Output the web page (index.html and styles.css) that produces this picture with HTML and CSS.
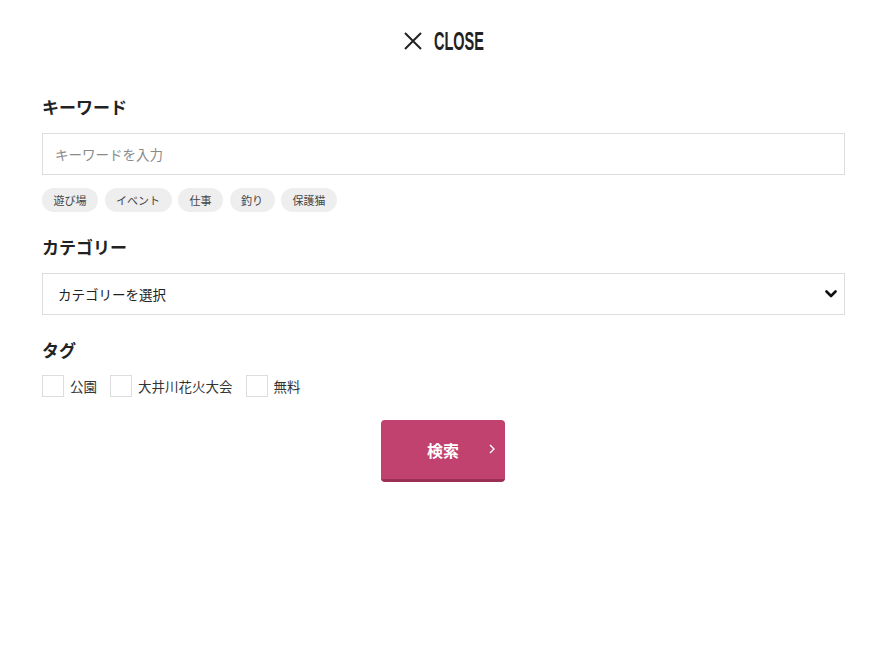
FILE: index.html
```html
<!DOCTYPE html>
<html lang="ja">
<head>
<meta charset="utf-8">
<title>検索</title>
<link rel="stylesheet" href="styles.css">
</head>
<body>
<div class="modal">
  <div class="close-row">
    <svg class="close-icon" width="18" height="18" viewBox="0 0 18 18"><path d="M1 1L17 17M17 1L1 17" stroke="#222" stroke-width="2" fill="none"/></svg>
    <span class="close-box"><span class="close-text">CLOSE</span></span>
  </div>

  <section class="group group-keyword">
    <h2 class="label">キーワード</h2>
    <input class="field" type="text" placeholder="キーワードを入力">
    <div class="chips">
      <span class="chip">遊び場</span>
      <span class="chip">イベント</span>
      <span class="chip">仕事</span>
      <span class="chip">釣り</span>
      <span class="chip">保護猫</span>
    </div>
  </section>

  <section class="group group-category">
    <h2 class="label">カテゴリー</h2>
    <div class="select">
      <span>カテゴリーを選択</span>
      <svg width="12" height="8" viewBox="0 0 12 8"><path d="M1.5 1.5L6 6L10.5 1.5" stroke="#111" stroke-width="2.6" fill="none" stroke-linecap="round" stroke-linejoin="round"/></svg>
    </div>
  </section>

  <section class="group group-tag">
    <h2 class="label">タグ</h2>
    <div class="checks">
      <label class="check"><span class="box"></span>公園</label>
      <label class="check"><span class="box"></span>大井川花火大会</label>
      <label class="check"><span class="box"></span>無料</label>
    </div>
  </section>

  <div class="actions">
    <button class="submit" type="button">
      <span class="submit-text">検索</span>
      <svg class="submit-arrow" width="6" height="10" viewBox="0 0 6 10"><path d="M1 1L5 5L1 9" stroke="#fff" stroke-width="1.4" fill="none"/></svg>
    </button>
  </div>
</div>
</body>
</html>
```

FILE: styles.css
```css
* { box-sizing: border-box; }
html, body { margin: 0; background: #fff; }
body {
  font-family: "Noto Sans CJK JP", "Noto Sans", sans-serif;
  color: #222;
}
.modal {
  padding: 28px 41px 0 42px;
}
.close-row {
  display: flex;
  justify-content: center;
  align-items: center;
  gap: 12px;
  height: 26px;
}
.close-box {
  display: inline-block;
  width: 50px;
  height: 26px;
  overflow: visible;
  white-space: nowrap;
}
.close-text {
  display: inline-block;
  font-family: "Liberation Sans", sans-serif;
  font-size: 25px;
  font-weight: 700;
  line-height: 26px;
  color: #222;
  transform: scaleX(0.58);
  transform-origin: left center;
}
.label {
  margin: 0;
  font-size: 17px;
  font-weight: 700;
  line-height: 24px;
  color: #222;
}
.group-keyword { margin-top: 41px; }
.group-category { margin-top: 23px; }
.group-tag { margin-top: 23px; }
.field {
  display: block;
  width: 100%;
  height: 42px;
  margin-top: 14px;
  border: 1px solid #ddd;
  padding: 0 12px;
  font-family: "Noto Sans CJK JP", sans-serif;
  font-size: 13.5px;
  color: #222;
  outline: none;
}
.field::placeholder { color: #8a8a8a; }
.chips {
  display: flex;
  gap: 6.5px;
  margin-top: 13px;
}
.chip {
  height: 24px;
  line-height: 24px;
  padding: 0 11.5px;
  border-radius: 12px;
  background: #eeeeee;
  font-size: 11px;
  color: #444;
}
.select {
  display: flex;
  align-items: center;
  justify-content: space-between;
  height: 42px;
  margin-top: 14px;
  border: 1px solid #ddd;
  padding: 0 7px 0 15px;
  font-size: 13.5px;
  color: #222;
}
.checks {
  display: flex;
  gap: 13px;
  margin-top: 13px;
}
.check {
  display: flex;
  align-items: center;
  gap: 6px;
  font-size: 13.5px;
  color: #333;
  line-height: 22px;
}
.box {
  width: 22px;
  height: 22px;
  border: 1px solid #ddd;
  background: #fff;
}
.actions {
  display: flex;
  justify-content: center;
  margin-top: 23px;
  padding-right: 1px;
}
.submit {
  position: relative;
  width: 124px;
  height: 62px;
  border: none;
  border-bottom: 3px solid #9b2f55;
  border-radius: 4px;
  background: #c1416f;
  color: #fff;
  font-family: "Noto Sans CJK JP", sans-serif;
  font-size: 16px;
  font-weight: 700;
  display: flex;
  align-items: center;
  justify-content: center;
  padding: 0;
}
.submit-arrow {
  position: absolute;
  right: 10px;
  top: 24px;
}
```
